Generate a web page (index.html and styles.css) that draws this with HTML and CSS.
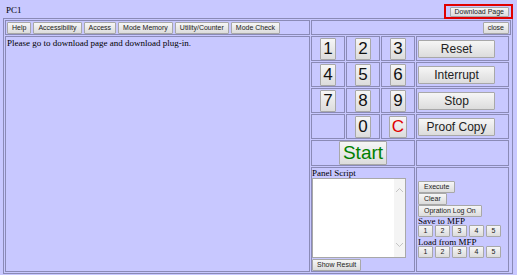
FILE: index.html
```html
<!doctype html>
<html>
    <head>
        <meta charset="utf-8">
        <title>PC1</title>
        <link rel="stylesheet" href="styles.css">
    </head>
    <body>
        <div class="head">
            <span class="title">PC1</span>
            <span class="dl-frame"><button type="button" class="btn">Download Page</button></span>
        </div>
        <table class="frame">
            <tr>
                <td class="toolbar">
                    <div class="tools">
                        <button type="button" class="btn">Help</button>
                        <button type="button" class="btn">Accessibility</button>
                        <button type="button" class="btn">Access</button>
                        <button type="button" class="btn">Mode Memory</button>
                        <button type="button" class="btn">Utility/Counter</button>
                        <button type="button" class="btn">Mode Check</button>
                    </div>
                </td>
                <td class="closebar"><button type="button" class="btn">close</button></td>
            </tr>
            <tr>
                <td class="content">Please go to download page and download plug-in.</td>
                <td class="panel">
                    <table class="keys">
                        <tr>
                            <td class="k"><button type="button" class="btn key">1</button></td>
                            <td class="k"><button type="button" class="btn key">2</button></td>
                            <td class="k"><button type="button" class="btn key">3</button></td>
                            <td class="cmd"><button type="button" class="btn wide">Reset</button></td>
                        </tr>
                        <tr>
                            <td class="k"><button type="button" class="btn key">4</button></td>
                            <td class="k"><button type="button" class="btn key">5</button></td>
                            <td class="k"><button type="button" class="btn key">6</button></td>
                            <td class="cmd"><button type="button" class="btn wide">Interrupt</button></td>
                        </tr>
                        <tr>
                            <td class="k"><button type="button" class="btn key">7</button></td>
                            <td class="k"><button type="button" class="btn key">8</button></td>
                            <td class="k"><button type="button" class="btn key">9</button></td>
                            <td class="cmd"><button type="button" class="btn wide">Stop</button></td>
                        </tr>
                        <tr>
                            <td class="k"></td>
                            <td class="k"><button type="button" class="btn key">0</button></td>
                            <td class="k"><button type="button" class="btn key clear">C</button></td>
                            <td class="cmd"><button type="button" class="btn wide">Proof Copy</button></td>
                        </tr>
                        <tr>
                            <td class="start-cell" colspan="3"><button type="button" class="btn start">Start</button></td>
                            <td></td>
                        </tr>
                        <tr>
                            <td class="script" colspan="3">
                                <div class="label">Panel Script</div>
                                <div class="area">
                                    <textarea></textarea>
                                    <div class="scroll">
                                        <svg width="9" height="6" viewBox="0 0 9 6"><path d="M1 5 L4.5 1.5 L8 5" fill="none" stroke="#c4c4c4" stroke-width="1"/></svg>
                                        <svg width="9" height="6" viewBox="0 0 9 6"><path d="M1 1 L4.5 4.5 L8 1" fill="none" stroke="#c4c4c4" stroke-width="1"/></svg>
                                    </div>
                                </div>
                                <button type="button" class="btn">Show Result</button>
                            </td>
                            <td class="ops">
                                <div class="op"><button type="button" class="btn">Execute</button></div>
                                <div class="op"><button type="button" class="btn">Clear</button></div>
                                <div class="op"><button type="button" class="btn">Opration Log On</button></div>
                                <div class="label">Save to MFP</div>
                                <div class="slots">
                                    <button type="button" class="btn num">1</button>
                                    <button type="button" class="btn num">2</button>
                                    <button type="button" class="btn num">3</button>
                                    <button type="button" class="btn num">4</button>
                                    <button type="button" class="btn num">5</button>
                                </div>
                                <div class="label">Load from MFP</div>
                                <div class="slots">
                                    <button type="button" class="btn num">1</button>
                                    <button type="button" class="btn num">2</button>
                                    <button type="button" class="btn num">3</button>
                                    <button type="button" class="btn num">4</button>
                                    <button type="button" class="btn num">5</button>
                                </div>
                            </td>
                        </tr>
                    </table>
                </td>
            </tr>
        </table>
    </body>
</html>
```

FILE: styles.css
```css
body {
    margin: 0;
    background-color: #c8c8ff;
    font-family: "Liberation Serif", serif;
    font-size: 9px;
    color: #000;
}
.head {
    display: flex;
    justify-content: space-between;
    align-items: flex-end;
    height: 18px;
    padding: 0 4px 0 6px;
}
.title {
    padding-bottom: 3px;
}
.dl-frame {
    border: 2px solid #e00000;
    padding: 1px 2px 0 4px;
    line-height: 0;
    margin-bottom: -1px;
}
.dl-frame .btn {
    height: 10px;
    line-height: 8px;
}
.btn {
    font-family: "Liberation Sans", Arial, sans-serif;
    font-size: 7px;
    color: #222;
    background: linear-gradient(#f6f6f6, #dcdcdc);
    border: 1px solid #a8a8a8;
    border-radius: 1px;
    padding: 0 4px;
    height: 12px;
    line-height: 10px;
    margin: 0;
    cursor: pointer;
}
.frame {
    border-collapse: separate;
    border-spacing: 1px;
    border: 1px solid #8a8ab6;
    margin: 0 0 0 3px;
    width: 510px;
}
.frame td {
    border: 1px solid #8a8ab6;
    padding: 0;
}
.toolbar {
    width: 302px;
    height: 13px;
    padding: 0 0 0 1px !important;
}
.tools {
    display: flex;
    gap: 2px;
}
.tools .btn {
    padding: 0 4px;
}
.closebar {
    text-align: right;
    padding-right: 1px !important;
}
.content {
    vertical-align: top;
    padding: 1px 1px !important;
}
.panel {
    border: none !important;
    vertical-align: top;
}
.keys {
    border-collapse: separate;
    border-spacing: 1px;
    width: 100%;
    margin: -1px;
}
.keys td.k {
    width: 32px;
    height: 23px;
    text-align: center;
}
.keys td.cmd {
    padding-left: 1px;
}
.key {
    font-size: 17px;
    height: 22px;
    line-height: 20px;
    padding: 0 2px;
    color: #111;
}
.clear {
    color: #e00000;
}
.wide {
    width: 77px;
    height: 18px;
    font-size: 12px;
    line-height: 16px;
}
.start-cell {
    height: 22px;
    text-align: center;
}
.start {
    font-size: 19px;
    height: 24px;
    line-height: 22px;
    color: #008000;
    padding: 0 3px;
}
.script {
    vertical-align: top;
    height: 98px;
    padding: 1px 0 0 0 !important;
}
.label {
    line-height: 8px;
}
.area {
    display: flex;
    width: 92px;
    height: 78px;
    border: 1px solid #a8a8a8;
    background: #fff;
    margin: 1px 0 1px 0;
}
.area textarea {
    flex: 1;
    border: none;
    resize: none;
    outline: none;
    padding: 0;
    margin: 0;
}
.scroll {
    width: 11px;
    background: #f4f4f4;
    display: flex;
    flex-direction: column;
    justify-content: space-between;
    align-items: center;
    padding: 8px 0 9px 0;
}
.ops {
    vertical-align: middle;
    padding-left: 1px !important;
}
.op {
    height: 12px;
    margin-bottom: 0;
}
.ops .op .btn {
    padding: 0 5px;
}
.slots {
    display: flex;
    gap: 2px;
    height: 13px;
}
.slots .btn.num {
    width: 15px;
    padding: 0;
}
```
